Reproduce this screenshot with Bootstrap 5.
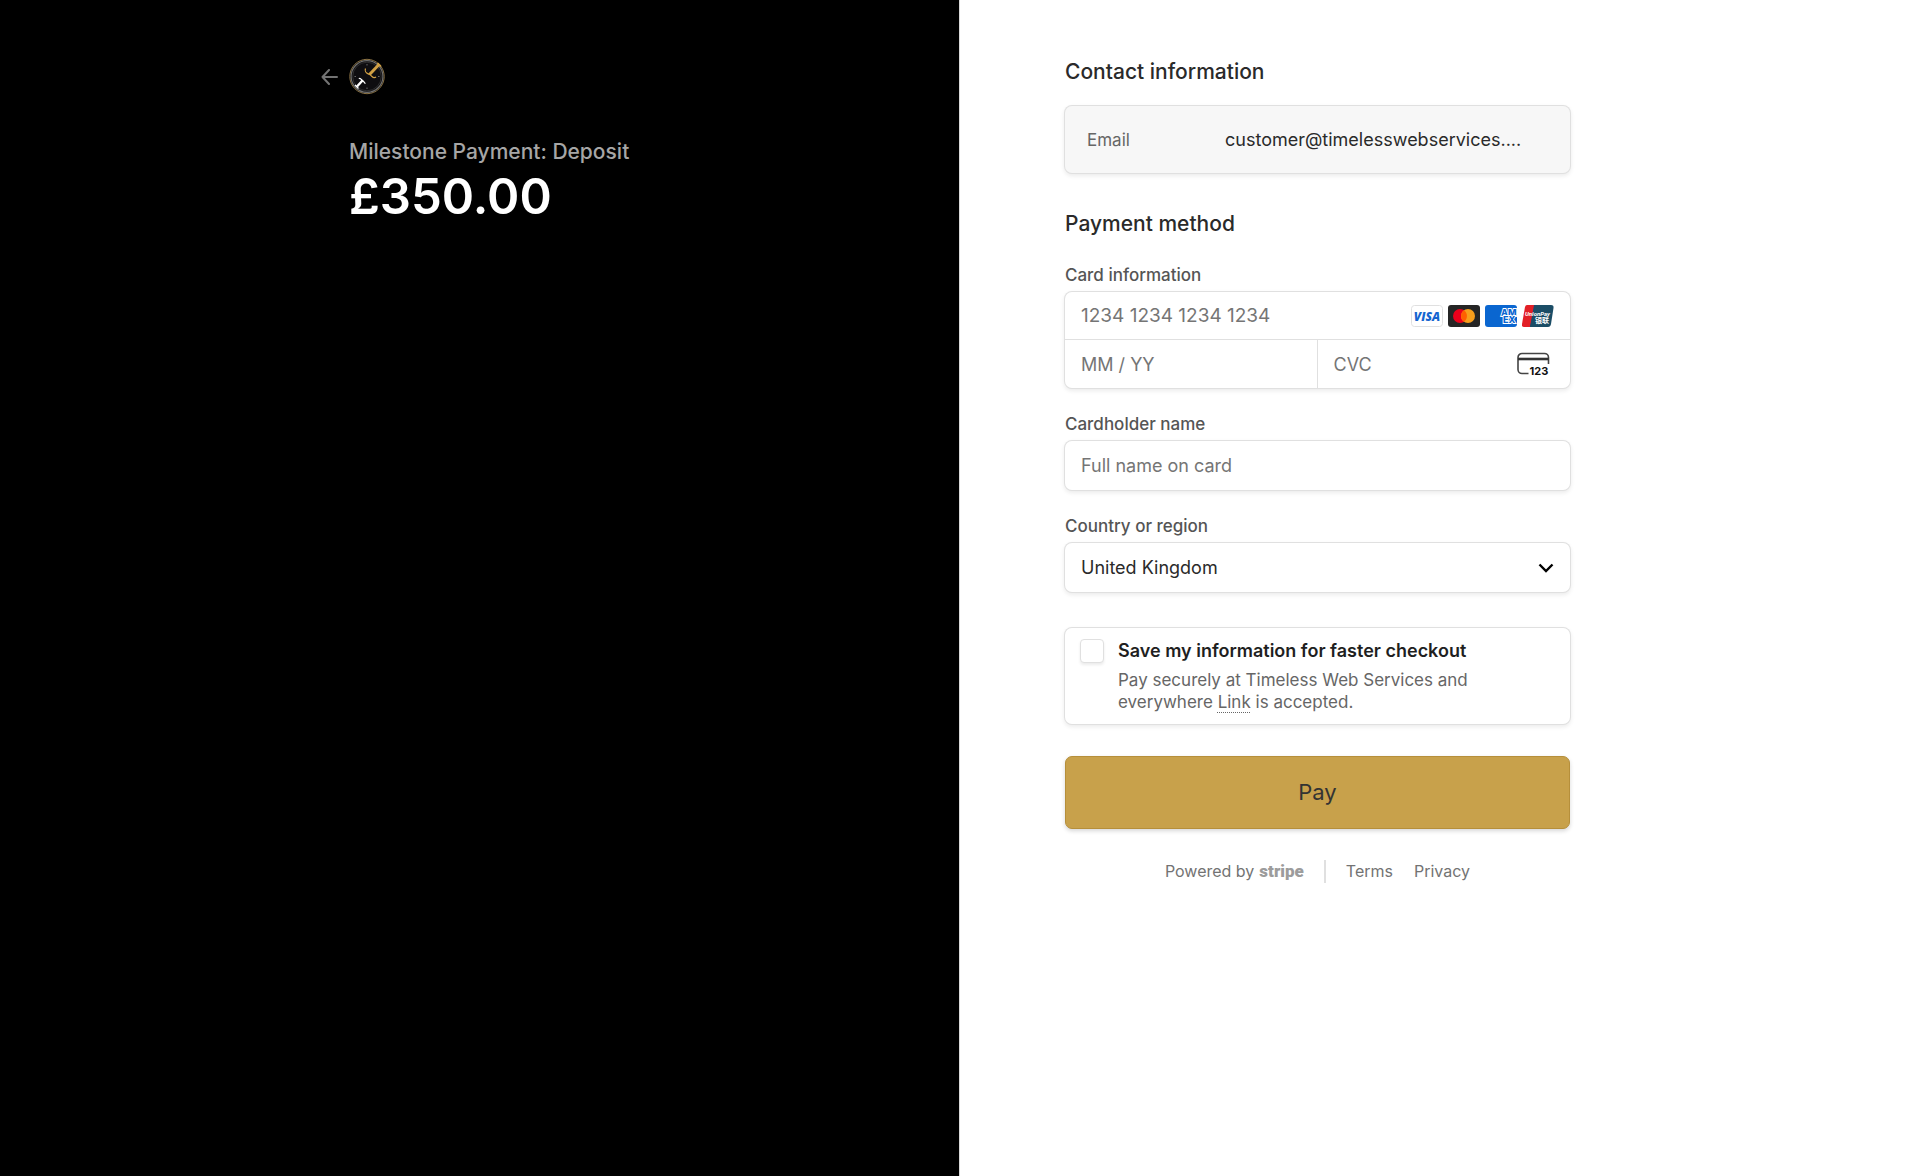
<!DOCTYPE html>
<html lang="en">
<head>
<meta charset="utf-8">
<meta name="viewport" content="width=device-width, initial-scale=1">
<title>Timeless Web Services – Checkout</title>
<link rel="stylesheet" href="https://cdn.jsdelivr.net/npm/bootstrap@5.3.0/dist/css/bootstrap.min.css">
<style>
  :root { --ring: 0 0 0 1px #e0e0e0, 0 2px 4px 1px rgba(0,0,0,.08); }
  body { font-family: Inter, "Liberation Sans", sans-serif; color: #2a2a2a; font-size: 18px; line-height: 24px; }
  .summary-pane { background: #000; color: #fff; padding: 56px 104px 48px 24px; border-right: 1px solid #d9d9d9; }
  .summary-inner { max-width: 534px; }
  .back-link { color: #737373; width: 28px; }
  .summary-body { padding-left: 28px; padding-top: 39px; }
  .product-title { color: #a6a6a6; font-size: 21px; line-height: 32px; }
  .price { font-size: 49px; line-height: 58px; }
  .form-pane { background: #fff; padding: 56px 24px 48px 105px; }
  .form-inner { max-width: 505px; }
  .section-title { font-size: 21px; line-height: 32px; }
  .section-gap { margin-top: 35px; margin-bottom: 23px; }
  .pane-box, .field, .card-group-box { border: 0; border-radius: 7px; box-shadow: var(--ring); background-color: #fff; }
  .contact-box { background-color: #f7f7f7; height: 67px; padding: 0 22px; margin-top: 18px; }
  .contact-key { width: 138px; color: #666; font-size: 17px; }
  .field-block { margin-bottom: 24px; }
  .field-label { color: #555; font-size: 17px; line-height: 24px; margin-bottom: 5px; font-weight: 500; }
  .field { height: 49px; padding: 0 16px; font-size: 18px; color: #2a2a2a; }
  .form-select.field { background-image: url("data:image/svg+xml,%3Csvg xmlns='http://www.w3.org/2000/svg' viewBox='0 0 16 10'%3E%3Cpath d='M1.5 1.5 8 8l6.5-6.5' fill='none' stroke='%23000' stroke-width='2.4'/%3E%3C/svg%3E"); background-repeat: no-repeat; background-size: 16px 10px; background-position: right 16px center; }
  .card-group-box input { border: 0; height: 48px; padding: 0 16px; font-size: 18px; background: transparent; }
  .card-group-box #cardNumber { height: 47px; font-size: 19px; }
  .card-line { border-bottom: 1px solid #e0e0e0; }
  .cell-split { border-right: 1px solid #e0e0e0; }
  .form-control::placeholder { color: #757575; }
  .brands { gap: 5px; padding-right: 16px; }
  .cvc-art { margin-right: 20px; }
  .save-box { margin-top: 36px; padding: 11px 15px; min-height: 96px; }
  .save-box .form-check-input { width: 24px; height: 24px; margin: 0 14px 0 0; border: 1px solid #e0e0e0; border-radius: 4px; box-shadow: 0 2px 3px rgba(0,0,0,.08); }
  .save-title { font-size: 18px; color: #1f1f1f; }
  .save-note { color: #666; font-size: 17px; line-height: 22px; margin: 6px 0 0; max-width: 380px; }
  .save-note a { color: inherit; text-decoration: underline dotted 1px; text-underline-offset: 4px; }
  .pay-btn { background: #c8a14b; border: 1px solid #b68f3b; border-radius: 7px; color: #333; height: 73px; font-size: 22px; margin-top: 32px; box-shadow: 0 2px 4px rgba(0,0,0,.16); }
  .pay-btn:hover { background: #bc953f; color: #333; }
  .legal { color: #737373; font-size: 16px; margin-top: 30px; }
  .legal a { color: inherit; text-decoration: none; }
  .legal-terms { margin-right: 21px; }
  .wordmark { font-family: Roboto, "Liberation Sans", sans-serif; font-weight: 900; font-size: 17px; color: #9c9c9c; margin-left: 5px; }
  .legal-rule { width: 2px; height: 23px; background: #e0e0e0; margin: 0 20px; }
</style>
<script src="https://cdn.jsdelivr.net/npm/bootstrap@5.3.0/dist/js/bootstrap.bundle.min.js"></script>
</head>
<body>
<div class="row g-0 min-vh-100">
  <aside class="summary-pane col-12 col-lg-6">
    <div class="summary-inner ms-auto">
      <div class="d-flex align-items-center">
        <a href="#" class="back-link d-flex" aria-label="Back">
          <svg width="17" height="16" viewBox="0 0 17 16" fill="none" stroke="currentColor" stroke-width="2" stroke-linecap="round" stroke-linejoin="round"><path d="M8 1 1.500 8 8 15M1.500 8H16"/></svg>
        </a>
        <svg width="36" height="41" viewBox="-18 -20.500 36 41" fill="none" role="img" aria-label="Timeless Web Services">
          <circle r="15.500" fill="#0e0d10"/>
          <circle r="17.200" stroke="#8d7445" stroke-width="1"/>
          <circle r="15.900" stroke="#6f6f6f" stroke-width="1.200"/>
          <circle r="14.300" stroke="#444" stroke-width=".6"/>
          <path d="M0-12.500v1.500M0 11v1.500M-12.500 0h1.500M11 0h1.500" stroke="#666"/>
          <path d="M12.500-12.500 2.500-2" stroke="#d1a044" stroke-width="3"/>
          <path d="M-1.500-8C-3-4 0-3 2.500-2S6 3 9 .5" stroke="#d1a044" stroke-width="1.200"/>
          <path d="M10.500-13.500 14-10" stroke="#d1a044" stroke-width="1.600"/>
          <path d="M-10 10-4.500 4" stroke="#fff" stroke-width="2.400"/>
          <path d="M-8 2.500C-7 1-6 3-4.500 4S-2 7-1.500 7M-12 8.500-8.500 12" stroke="#fff" stroke-width="1.200"/>
        </svg>
      </div>
      <div class="summary-body">
        <h1 class="product-title fw-medium mb-0">Milestone Payment: Deposit</h1>
        <p class="price fw-semibold mb-0">£350.00</p>
      </div>
    </div>
  </aside>

  <main class="form-pane col-12 col-lg-6">
    <form class="form-inner">
      <h2 class="section-title mb-0">Contact information</h2>
      <div class="pane-box contact-box d-flex align-items-center">
        <span class="contact-key flex-shrink-0">Email</span>
        <span class="text-truncate">customer@timelesswebservices....</span>
      </div>

      <h2 class="section-title section-gap">Payment method</h2>

      <div class="field-block">
        <label class="field-label d-block" for="cardNumber">Card information</label>
        <div class="card-group-box">
          <div class="card-line d-flex align-items-center">
            <input class="form-control shadow-none" id="cardNumber" type="text" placeholder="1234 1234 1234 1234">
            <div class="brands d-flex flex-shrink-0">
              <svg width="32" height="22" viewBox="0 0 32 22" role="img" aria-label="Visa"><rect x=".5" y=".5" width="31" height="21" rx="3" fill="#fff" stroke="#e0e0e0"/><text x="16" y="15.500" text-anchor="middle" font-family="Open Sans, sans-serif" font-size="12" font-weight="800" font-style="italic" fill="#1565d0">VISA</text></svg>
              <svg width="32" height="22" viewBox="0 0 32 22" role="img" aria-label="Mastercard"><rect width="32" height="22" rx="3" fill="#252525"/><circle cx="12" cy="11" r="7" fill="#eb001b"/><circle cx="20" cy="11" r="7" fill="#f79e1b"/><path d="M16 5.300a7 7 0 0 1 0 11.400 7 7 0 0 1 0-11.400z" fill="#ff5f00"/></svg>
              <svg width="32" height="22" viewBox="0 0 32 22" role="img" aria-label="American Express"><rect width="32" height="22" rx="3" fill="#0a66d0"/><g fill="#0a66d0" stroke="#fff" stroke-width="1.800" paint-order="stroke" font-family="Inter, sans-serif" font-size="9" font-weight="800"><text x="16" y="10.500">AM</text><text x="18" y="18">EX</text></g></svg>
              <svg width="32" height="22" viewBox="0 0 32 22" role="img" aria-label="UnionPay"><path d="M5 0h9L10 22H2q-2.500 0-2-3L3 2q.5-2 2-2z" fill="#e21f26"/><path d="M12 0h11l-4 22H8z" fill="#23456f"/><path d="M13 0h16q3 0 2.500 3L29 19q-.5 3-3 3H8z" fill="#1b4d66"/><g fill="#fff"><text x="3" y="10.500" font-family="Roboto, sans-serif" font-size="6" font-weight="700" font-style="italic">UnionPay</text><text x="13" y="17.500" font-family="Noto Sans CJK SC, sans-serif" font-size="7" font-weight="700">银联</text></g></svg>
            </div>
          </div>
          <div class="row g-0">
            <div class="col-6 cell-split"><input class="form-control shadow-none" type="text" aria-label="Expiry" placeholder="MM / YY"></div>
            <div class="col-6 d-flex align-items-center">
              <input class="form-control shadow-none" type="text" aria-label="CVC" placeholder="CVC">
              <svg class="cvc-art flex-shrink-0" width="33" height="24" viewBox="0 0 33 24" aria-hidden="true"><path d="M31.500 12V5.500a4 4 0 0 0-4-4H5a4 4 0 0 0-4 4v12a4 4 0 0 0 4 4h6.500" fill="none" stroke="#444" stroke-width="1.600"/><path d="M1 7h30.500" stroke="#333" stroke-width="2.600"/><text x="12.500" y="23" font-family="Inter, sans-serif" font-size="11" font-weight="700" fill="#111">123</text></svg>
            </div>
          </div>
        </div>
      </div>

      <div class="field-block">
        <label class="field-label d-block" for="holder">Cardholder name</label>
        <input class="form-control field" id="holder" type="text" placeholder="Full name on card">
      </div>

      <div class="field-block">
        <label class="field-label d-block" for="country">Country or region</label>
        <select class="form-select field" id="country"><option>United Kingdom</option></select>
      </div>

      <div class="pane-box save-box d-flex align-items-start">
        <input class="form-check-input flex-shrink-0" type="checkbox" id="save">
        <div>
          <label class="save-title fw-semibold d-block" for="save">Save my information for faster checkout</label>
          <p class="save-note">Pay securely at Timeless Web Services and everywhere <a href="#">Link</a> is accepted.</p>
        </div>
      </div>

      <button class="btn pay-btn w-100" type="submit">Pay</button>

      <div class="legal d-flex justify-content-center align-items-center">
        <span>Powered by</span><span class="wordmark">stripe</span>
        <span class="legal-rule"></span>
        <a href="#" class="legal-terms">Terms</a><a href="#">Privacy</a>
      </div>
    </form>
  </main>
</div>
</body>
</html>
